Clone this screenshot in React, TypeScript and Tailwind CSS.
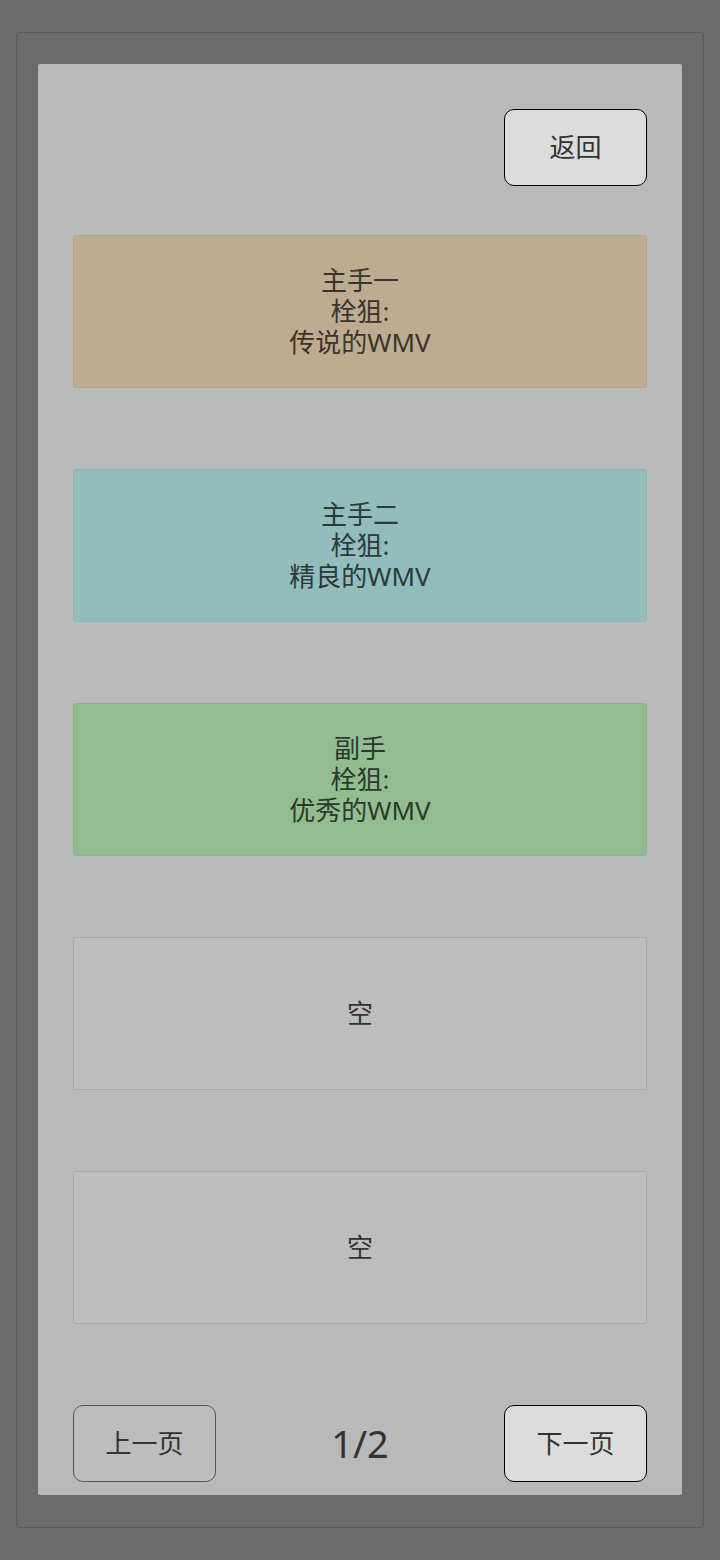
const font = { fontFamily: '"Noto Sans", "Noto Sans CJK SC", sans-serif' };

type Slot = { lines: string[]; bg: string; text: string; border: string };

const slots: Slot[] = [
  { lines: ['主手一', '栓狙:', '传说的WMV'], bg: 'bg-[#bcac91]', text: 'text-[#3d3428]', border: 'border-[#b4a488]' },
  { lines: ['主手二', '栓狙:', '精良的WMV'], bg: 'bg-[#93bcbc]', text: 'text-[#2c3a3a]', border: 'border-[#8cb4b4]' },
  { lines: ['副手', '栓狙:', '优秀的WMV'], bg: 'bg-[#93bd91]', text: 'text-[#2c3a2c]', border: 'border-[#8cb58a]' },
  { lines: ['空'], bg: 'bg-[#bdbdbd]', text: 'text-[#333333]', border: 'border-[#a9a9a9]' },
  { lines: ['空'], bg: 'bg-[#bdbdbd]', text: 'text-[#333333]', border: 'border-[#a9a9a9]' },
];

export default function App() {
  return (
    <div className="w-[720px] h-[1560px] bg-[#6b6b6b] pt-[32px] px-[16px]" style={font}>
      {/* Outer frame */}
      <div className="h-[1496px] border border-[#5c5c5c] rounded-[3px] bg-[#6b6b6b] pt-[31px] px-[21px]">
        {/* Inner panel */}
        <div className="h-[1431px] bg-[#b9b9b9] rounded-[2px] px-[35px] pt-[45px] flex flex-col">
          <div className="flex justify-end">
            <button className="w-[143px] h-[77px] rounded-[10px] border-[1.5px] border-black bg-[#dcdcdc] text-[26px] text-[#333333]">
              返回
            </button>
          </div>

          <div className="mt-[49px] flex flex-col gap-[81px]">
            {slots.map((s, i) => (
              <div
                key={i}
                className={`h-[153px] rounded-[3px] border ${s.bg} ${s.border} ${s.text} flex flex-col items-center justify-center text-[26px] leading-[31px]`}
              >
                {s.lines.map((l, j) => (
                  <span key={j}>{l}</span>
                ))}
              </div>
            ))}
          </div>

          <div className="mt-[81px] flex items-center justify-between">
            <button className="w-[143px] h-[77px] rounded-[10px] border border-[#555555] bg-[#bdbdbd] text-[26px] text-[#333333]">
              上一页
            </button>
            <span className="text-[38px] text-[#333333]">1/2</span>
            <button className="w-[143px] h-[77px] rounded-[10px] border-[1.5px] border-black bg-[#dcdcdc] text-[26px] text-[#333333]">
              下一页
            </button>
          </div>
        </div>
      </div>
    </div>
  );
}
